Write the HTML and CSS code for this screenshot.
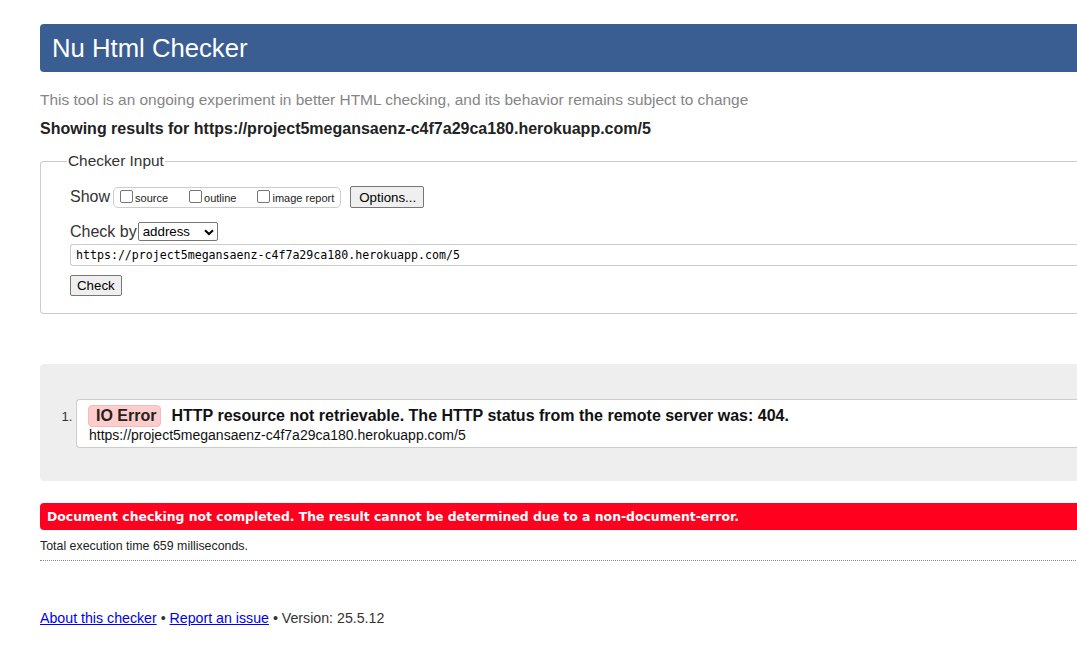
FILE: index.html
```html
<!DOCTYPE html>
<html lang="en">
<head>
<meta charset="utf-8">
<title>Nu Html Checker</title>
<link rel="stylesheet" href="styles.css">
</head>
<body>
<div class="page">
  <h1 class="title">Nu Html Checker</h1>
  <p class="tagline">This tool is an ongoing experiment in better HTML checking, and its behavior remains subject to change</p>
  <p class="showing">Showing results for https://project5megansaenz-c4f7a29ca180.herokuapp.com/5</p>
  <fieldset class="input">
    <legend>Checker Input</legend>
    <div class="row show-row">
      <span class="lbl">Show</span>
      <span class="opts">
        <label class="opt"><span class="cb"></span>source</label>
        <label class="opt"><span class="cb"></span>outline</label>
        <label class="opt"><span class="cb"></span>image report</label>
      </span>
      <button class="btn">Options...</button>
    </div>
    <div class="row by-row">
      <span class="lbl">Check by</span>
      <span class="select">address<svg class="chev" width="10" height="7" viewBox="0 0 10 7"><path d="M1 1.2 L5 5 L9 1.2" fill="none" stroke="#000" stroke-width="2"/></svg></span>
    </div>
    <div class="url">https://project5megansaenz-c4f7a29ca180.herokuapp.com/5</div>
    <button class="btn check">Check</button>
  </fieldset>

  <div class="results">
    <ol class="list">
      <li class="item">
        <p class="msg"><span class="badge">IO Error</span><span class="text">HTTP resource not retrievable. The HTTP status from the remote server was: 404.</span></p>
        <p class="loc">https://project5megansaenz-c4f7a29ca180.herokuapp.com/5</p>
      </li>
    </ol>
  </div>

  <p class="failure">Document checking not completed. The result cannot be determined due to a non-document-error.</p>
  <p class="stats">Total execution time 659 milliseconds.</p>
  <hr class="rule">
  <p class="footer"><a href="#">About this checker</a> • <a href="#">Report an issue</a> • Version: 25.5.12</p>
</div>
</body>
</html>
```
FILE: styles.css
```css
html, body {
  margin: 0;
  padding: 0;
  overflow: hidden;
  background: #fff;
}
body {
  font-family: "Liberation Sans", Arial, sans-serif;
  color: #222;
}
.page {
  width: 1080px;
  padding: 24px 0 0 40px;
}
.title {
  margin: 0;
  height: 48px;
  line-height: 48px;
  padding-left: 12px;
  background: #3a5d92;
  color: #fff;
  font-weight: normal;
  font-size: 25.7px;
  border-radius: 4px 0 0 4px;
}
.tagline {
  margin: 17px 0 0;
  font-size: 15.45px;
  line-height: 22px;
  color: #858585;
}
.showing {
  margin: 7px 0 0;
  font-size: 16px;
  line-height: 22px;
  font-weight: bold;
}
.input {
  margin: 12px 0 0;
  border: 1px solid #ccc;
  border-right: none;
  border-radius: 4px 0 0 4px;
  padding: 6px 0 17px 29px;
}
.input legend {
  font-size: 15.4px;
  padding: 0 1px;
  margin-left: -3px;
  color: #333;
}
.row {
  display: flex;
  align-items: center;
}
.lbl {
  font-size: 16px;
  color: #333;
}
.show-row {
  margin-top: 10px;
}
.opts {
  display: flex;
  align-items: center;
  height: 19px;
  margin-left: 3px;
  border: 1px solid #ccc;
  border-radius: 5px;
  padding: 0 6px 0 6px;
}
.opt {
  display: flex;
  align-items: center;
  font-size: 11px;
  color: #222;
  margin-right: 21px;
  padding-top: 2px;
}
.opt:last-child { margin-right: 0; }
.cb {
  display: inline-block;
  width: 11px;
  height: 11px;
  border: 1px solid #767676;
  border-radius: 2px;
  margin-right: 2px;
  margin-top: -3px;
  background: #fff;
}
.btn {
  font-family: "Liberation Sans", Arial, sans-serif;
  font-size: 13.3px;
  color: #000;
  background: #efefef;
  border: 1px solid #767676;
  border-radius: 2px;
  height: 22px;
  padding: 0 7px 0 8px;
  margin-left: 9px;
}
.by-row {
  margin-top: 14px;
}
.select {
  display: flex;
  align-items: center;
  justify-content: space-between;
  width: 80px;
  height: 19px;
  box-sizing: border-box;
  margin-left: 1px;
  border: 1px solid #767676;
  border-radius: 2px;
  padding: 0 3px 0 4px;
  font-size: 13.3px;
  color: #000;
}
.chev { margin-top: 1px; }
.url {
  margin-top: 3px;
  height: 22px;
  box-sizing: border-box;
  border: 1px solid #ccc;
  border-right: none;
  border-radius: 3px 0 0 3px;
  padding: 3px 5px 0;
  font-family: "DejaVu Sans Mono", "Liberation Mono", monospace;
  font-size: 11.6px;
  color: #000;
}
.check {
  display: block;
  margin: 9px 0 0;
  height: 21px;
  padding: 0 6px;
}
.results {
  margin-top: 50px;
  background: #eee;
  border-radius: 4px 0 0 4px;
  padding: 35px 0 33px;
}
.list {
  margin: 0;
  padding-left: 36px;
  font-size: 14px;
  color: #333;
}
.item {
  background: #fff;
  border: 1px solid #ccc;
  border-right: none;
  border-radius: 4px 0 0 4px;
  padding: 5px 0 4px 11px;
}
.item::marker {
  font-size: 13px;
}
.msg {
  margin: 0;
  display: flex;
  align-items: center;
  font-size: 16px;
  line-height: 18px;
  font-weight: bold;
  color: #111;
}
.badge {
  background: #fcc;
  border: 1px solid #f2bcbc;
  border-radius: 4px;
  padding: 1px 4px 1px 7px;
  margin-right: 10px;
  color: #222;
}
.loc {
  margin: 0 0 0 1px;
  font-size: 14px;
  line-height: 16px;
  color: #111;
}
.failure {
  margin: 22px 0 0;
  background: #ff001e;
  color: #fff;
  font-family: "DejaVu Sans", Verdana, sans-serif;
  font-weight: bold;
  font-size: 12.4px;
  line-height: 27px;
  padding-left: 7px;
  border-radius: 4px 0 0 4px;
}
.stats {
  margin: 9px 0 0;
  font-size: 12.4px;
  line-height: 14px;
  color: #222;
}
.rule {
  margin: 7px 0 0;
  border: none;
  border-top: 1px dotted #888;
}
.footer {
  margin: 49px 0 0;
  font-size: 14.2px;
  color: #333;
}
.footer a {
  color: #0000ee;
}
```
